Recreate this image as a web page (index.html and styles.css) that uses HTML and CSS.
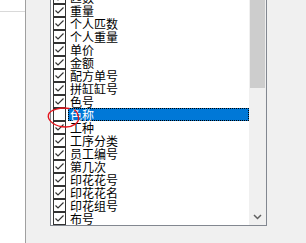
FILE: index.html
```html
<!DOCTYPE html>
<html>

<head>
    <title>字段选择</title>
    <link rel="stylesheet" href="styles.css">
</head>

<body>
    <div class="window">
        <!-- Left grid column -->
        <div class="side">
            <div class="side-rule"></div>
        </div>

        <!-- Checked list box -->
        <div class="listbox">
            <div class="items">
                <div class="items-inner">
                    <div class="item"><span class="check on"></span><span class="label">匹数</span></div>
                    <div class="item"><span class="check on"></span><span class="label">重量</span></div>
                    <div class="item"><span class="check on"></span><span class="label">个人匹数</span></div>
                    <div class="item"><span class="check on"></span><span class="label">个人重量</span></div>
                    <div class="item"><span class="check on"></span><span class="label">单价</span></div>
                    <div class="item"><span class="check on"></span><span class="label">金额</span></div>
                    <div class="item"><span class="check on"></span><span class="label">配方单号</span></div>
                    <div class="item"><span class="check on"></span><span class="label">拼缸缸号</span></div>
                    <div class="item"><span class="check on"></span><span class="label">色号</span></div>
                    <div class="item selected"><span class="check"></span><span class="label">色称</span></div>
                    <div class="item"><span class="check on"></span><span class="label">工种</span></div>
                    <div class="item"><span class="check on"></span><span class="label">工序分类</span></div>
                    <div class="item"><span class="check on"></span><span class="label">员工编号</span></div>
                    <div class="item"><span class="check on"></span><span class="label">第几次</span></div>
                    <div class="item"><span class="check on"></span><span class="label">印花花号</span></div>
                    <div class="item"><span class="check on"></span><span class="label">印花花名</span></div>
                    <div class="item"><span class="check on"></span><span class="label">印花组号</span></div>
                    <div class="item"><span class="check on"></span><span class="label">布号</span></div>
                </div>
            </div>

            <!-- Vertical scrollbar -->
            <div class="scrollbar">
                <div class="thumb"></div>
                <div class="track"></div>
                <div class="arrow">
                    <svg width="9" height="6" viewBox="0 0 9 6">
                        <path d="M1 1 L4.5 4.5 L8 1" fill="none" stroke="#606060" stroke-width="1.5" />
                    </svg>
                </div>
            </div>
        </div>
    </div>

    <!-- Hand-drawn red annotation round the unchecked box -->
    <svg class="mark" width="306" height="243" viewBox="0 0 306 243">
        <path d="M69 108.5 C61 107, 50 109.5, 48.5 114.5 C47 120.5, 55 127, 66 127 C73 127, 79.5 122.5, 78.5 117.5 C78 113.5, 76 111, 74.5 110"
            fill="none" stroke="#e5141c" stroke-width="1.4" stroke-linecap="round" />
    </svg>
</body>

</html>
```

FILE: styles.css
```css
/* Basic page */
body {
    margin: 0;
    width: 306px;
    height: 243px;
    overflow: hidden;
    background-color: #f0f0f0;
    font-family: "Noto Sans CJK SC", "Microsoft YaHei", sans-serif;
    font-size: 12px;
}

.window {
    display: flex;
    height: 243px;
}

/* Left grid column */
.side {
    width: 25px;
    background-color: #fff;
    border-right: 1px solid #a0a0a0;
}

.side-rule {
    height: 11px;
    border-bottom: 1px solid #d9d9d9;
}

/* Checked list box */
.listbox {
    display: flex;
    width: 215px;
    height: 225px;
    margin-left: 24px;
    border: 1px solid #828790;
    border-top: none;
}

.items {
    flex: 1;
    overflow: hidden;
    background-color: #fff;
}

.items-inner {
    margin-top: -9px;
}

.item {
    display: flex;
    align-items: center;
    height: 13px;
    padding-left: 2px;
}

.check {
    box-sizing: border-box;
    width: 13px;
    height: 13px;
    margin-right: 2px;
    border: 1px solid #333;
    background-color: #fff;
}

.check.on {
    background-image: url("data:image/svg+xml,%3Csvg xmlns='http://www.w3.org/2000/svg' width='11' height='11' viewBox='0 0 11 11'%3E%3Cpath d='M1.5 5.5 L4 8 L9.5 2.5' fill='none' stroke='%23333' stroke-width='1.2'/%3E%3C/svg%3E");
    background-repeat: no-repeat;
}

.label {
    flex: 1;
    height: 13px;
    line-height: 13px;
    padding-left: 2px;
    color: #000;
    white-space: nowrap;
}

.item.selected .label {
    box-sizing: border-box;
    background-color: #0078d7;
    color: #fff;
    border: 1px dotted #000;
    padding-left: 1px;
    line-height: 11px;
}

/* Scrollbar */
.scrollbar {
    display: flex;
    flex-direction: column;
    width: 17px;
    background-color: #f0f0f0;
}

.thumb {
    height: 88px;
    margin: 0 1px;
    background-color: #cdcdcd;
}

.track {
    flex: 1;
}

.arrow {
    display: flex;
    align-items: center;
    justify-content: center;
    height: 17px;
}

/* Annotation overlay */
.mark {
    position: absolute;
    top: 0;
    left: 0;
    pointer-events: none;
}
```
